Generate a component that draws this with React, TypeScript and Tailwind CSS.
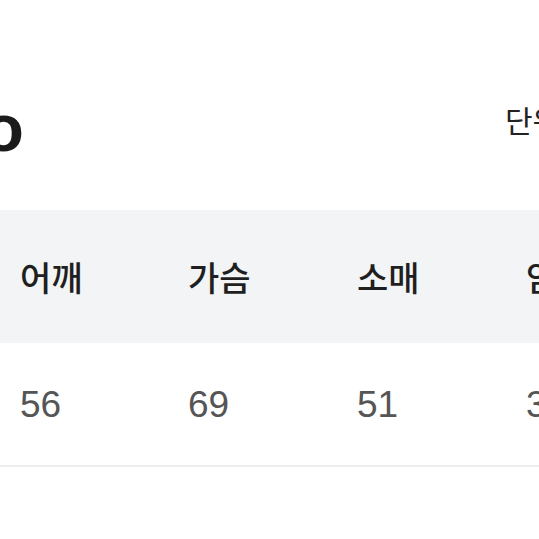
import React from 'react';

const COLS = ['어깨', '가슴', '소매', '암홀'];
const VALUES = ['56', '69', '51', '38'];

const App: React.FC = () => {
  return (
    <div className="w-[539px] h-[539px] overflow-hidden bg-white">
      {/* title */}
      <div className="h-[210px] flex justify-between items-start">
        <div className="-ml-[17px] mt-[94px] text-[67px] leading-none font-bold text-[#1b1b1b] font-['Liberation_Sans',sans-serif]">
          o
        </div>
        <div className="mt-[104px] shrink-0 w-[34px] overflow-visible whitespace-nowrap text-[30px] leading-none text-[#222] font-['Noto_Sans_CJK_KR',sans-serif]">
          단위: cm
        </div>
      </div>

      {/* header */}
      <div className="h-[133px] bg-[#f3f4f6] flex items-center pl-[20px]">
        <div className="grid grid-cols-[168px_169px_169px_169px] shrink-0">
          {COLS.map((c) => (
            <div
              key={c}
              className="text-[34px] leading-none font-medium text-[#1f1f1f] whitespace-nowrap font-['Noto_Sans_CJK_KR',sans-serif]"
            >
              {c}
            </div>
          ))}
        </div>
      </div>

      {/* values */}
      <div className="h-[124px] border-b-2 border-[#eeeeee] flex items-center pl-[20px]">
        <div className="grid grid-cols-[168px_169px_169px_169px] shrink-0">
          {VALUES.map((v, i) => (
            <div
              key={i}
              className="text-[37px] leading-none text-[#555] whitespace-nowrap font-['Liberation_Sans',sans-serif]"
            >
              {v}
            </div>
          ))}
        </div>
      </div>
    </div>
  );
};

export default App;
